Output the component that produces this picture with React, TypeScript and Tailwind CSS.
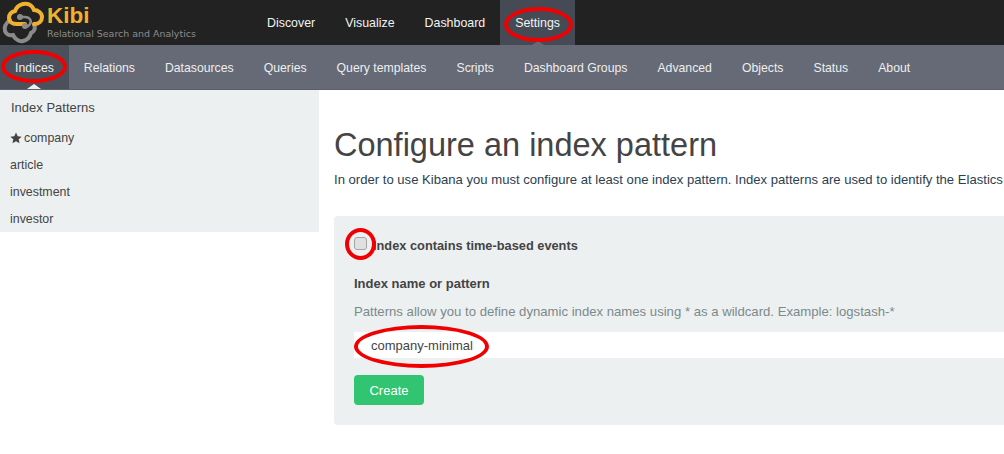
const topLinks = ["Discover", "Visualize", "Dashboard"];
const subLinks = ["Relations", "Datasources", "Queries", "Query templates", "Scripts", "Dashboard Groups", "Advanced", "Objects", "Status", "About"];
const patterns = ["article", "investment", "investor"];

function Ring({ className }: { className: string }) {
  return <div className={`pointer-events-none absolute rounded-[50%] border-[4.5px] border-[#f00000] ${className}`} />;
}

function Logo() {
  return (
    <svg width="44" height="45" viewBox="0 0 44 45" fill="none" className="shrink-0">
      <path d="M9 20 C5 23 3 27 4 31 C5 34 8 36 12 35 C14 39 18 42 22 41 C26 40 29 37 30 33 C33 32 35 28 33 25" stroke="#8a8a8a" strokeWidth="4" strokeLinecap="round" />
      <path d="M33 24 C38 24 41 21 41 17 C41 13 37 10 33 10 C31 5 27 3 22 4 C18 5 15 8 14 11 C10 12 8 15 8 18 C8 22 12 24 16 24 L24 24" stroke="#efb12f" strokeWidth="4" strokeLinecap="round" />
      <path d="M19 17 L24 17 C29 17 31 21 29 24 C28 26 26 27 24 27" stroke="#8a8a8a" strokeWidth="2.500" strokeLinecap="round" />
      <circle cx="19" cy="17" r="3" fill="#8a8a8a" />
      <circle cx="24" cy="26" r="3" fill="#8a8a8a" />
    </svg>
  );
}

export default function App() {
  return (
    <div className="relative h-[454px] w-[1004px] overflow-hidden bg-white font-['Liberation_Sans',Arial,sans-serif] text-[12.25px] text-[#444]">
      <header className="flex h-[45px] bg-[#222] text-[12.4px] text-[#f2f2f2]">
        <div className="flex w-[252px] items-start pl-[1px]">
          <Logo />
          <div className="ml-[2px] pt-[4px]">
            <div className="h-[24px] text-[22.500px] leading-[24px] font-bold text-[#efb12f]">Kibi</div>
            <div className="font-['DejaVu_Sans',sans-serif] text-[9.450px] leading-[11px] whitespace-nowrap text-[#8d8d8d]">Relational Search and Analytics</div>
          </div>
        </div>
        <nav className="flex">
          {topLinks.map((l) => (
            <a key={l} className="flex items-center px-[15px] pt-[1px]">{l}</a>
          ))}
          <a className="relative flex items-center bg-[#454a54] px-[15px] pt-[1px]">
            Settings
            <span className="absolute bottom-0 left-1/2 h-0 w-0 -translate-x-1/2 border-x-[6px] border-b-[4px] border-x-transparent border-b-[#656a76]" />
          </a>
        </nav>
      </header>
      <nav className="flex h-[45px] border-b border-[#5b5f6a] bg-[#656a76] text-[#eee]">
        <a className="relative flex items-center bg-[#4b505b] px-[15px] pt-[2px]">
          Indices
          <span className="absolute bottom-0 left-1/2 h-0 w-0 -translate-x-1/2 border-x-[7px] border-b-[5px] border-x-transparent border-b-[#ecf0f1]" />
        </a>
        {subLinks.map((l) => (
          <a key={l} className="flex items-center px-[15px] pt-[2px]">{l}</a>
        ))}
      </nav>
      <div className="flex">
        <aside className="h-[142px] w-[319px] shrink-0 bg-[#ecf0f1]">
          <div className="pl-[11px] pt-[10px] text-[13px] leading-[16px]">Index Patterns</div>
          <ul className="mt-[9px] text-[12.400px]">
            <li className="flex h-[27px] items-center pl-[10px]">
              <svg width="12" height="12" viewBox="0 0 24 24" fill="#444" className="mr-[2px] -translate-y-[1px]">
                <path d="M12 1l3.400 7.400 8 .9-6 5.400 1.700 8L12 18.700l-7.100 4 1.700-8-6-5.400 8-.9z" />
              </svg>
              company
            </li>
            {patterns.map((p) => (
              <li key={p} className="flex h-[27px] items-center pl-[10px]">{p}</li>
            ))}
          </ul>
        </aside>
        <main className="min-w-0 flex-1 pl-[15px]">
          <h1 className="mt-[35px] text-[32.500px] leading-[40px] font-normal whitespace-nowrap">Configure an index pattern</h1>
          <p className="mt-[6px] w-[670px] truncate text-[13.100px] leading-[18px] text-[#2c3e50]">
            In order to use Kibana you must configure at least one index pattern. Index patterns are used to identify the Elastics
          </p>
          <form className="mt-[27px] h-[209px] w-[670px] rounded-l-[4px] bg-[#ecf0f1] pl-[20px] pt-[20px]">
            <label className="flex h-[18px] items-start text-[12.800px] font-bold">
              <span className="mt-[1px] h-[13px] w-[13px] rounded-[3px] border border-[#a5a5a5] bg-[#e0e0e0]" />
              <span className="ml-[6px] pt-[1px] leading-[17px]">Index contains time-based events</span>
            </label>
            <div className="mt-[21px] text-[13px] leading-[18px] font-bold">Index name or pattern</div>
            <p className="mt-[10px] text-[13.150px] leading-[18px] text-[#7b8a8b]">
              Patterns allow you to define dynamic index names using * as a wildcard. Example: logstash-*
            </p>
            <div className="mt-[11px] flex h-[26px] items-center bg-white pl-[17px] pt-[1px] text-[13px]">company-minimal</div>
            <button type="button" className="mt-[17px] h-[30px] w-[70px] rounded-[4px] bg-[#31c471] pt-[1px] text-[13px] text-white">Create</button>
          </form>
        </main>
      </div>
      <Ring className="left-[1px] top-[50px] h-[33px] w-[66px]" />
      <Ring className="left-[504px] top-[7px] h-[35px] w-[69px]" />
      <Ring className="left-[345px] top-[228px] h-[32px] w-[31px]" />
      <Ring className="left-[354px] top-[325px] h-[43px] w-[135px]" />
    </div>
  );
}
